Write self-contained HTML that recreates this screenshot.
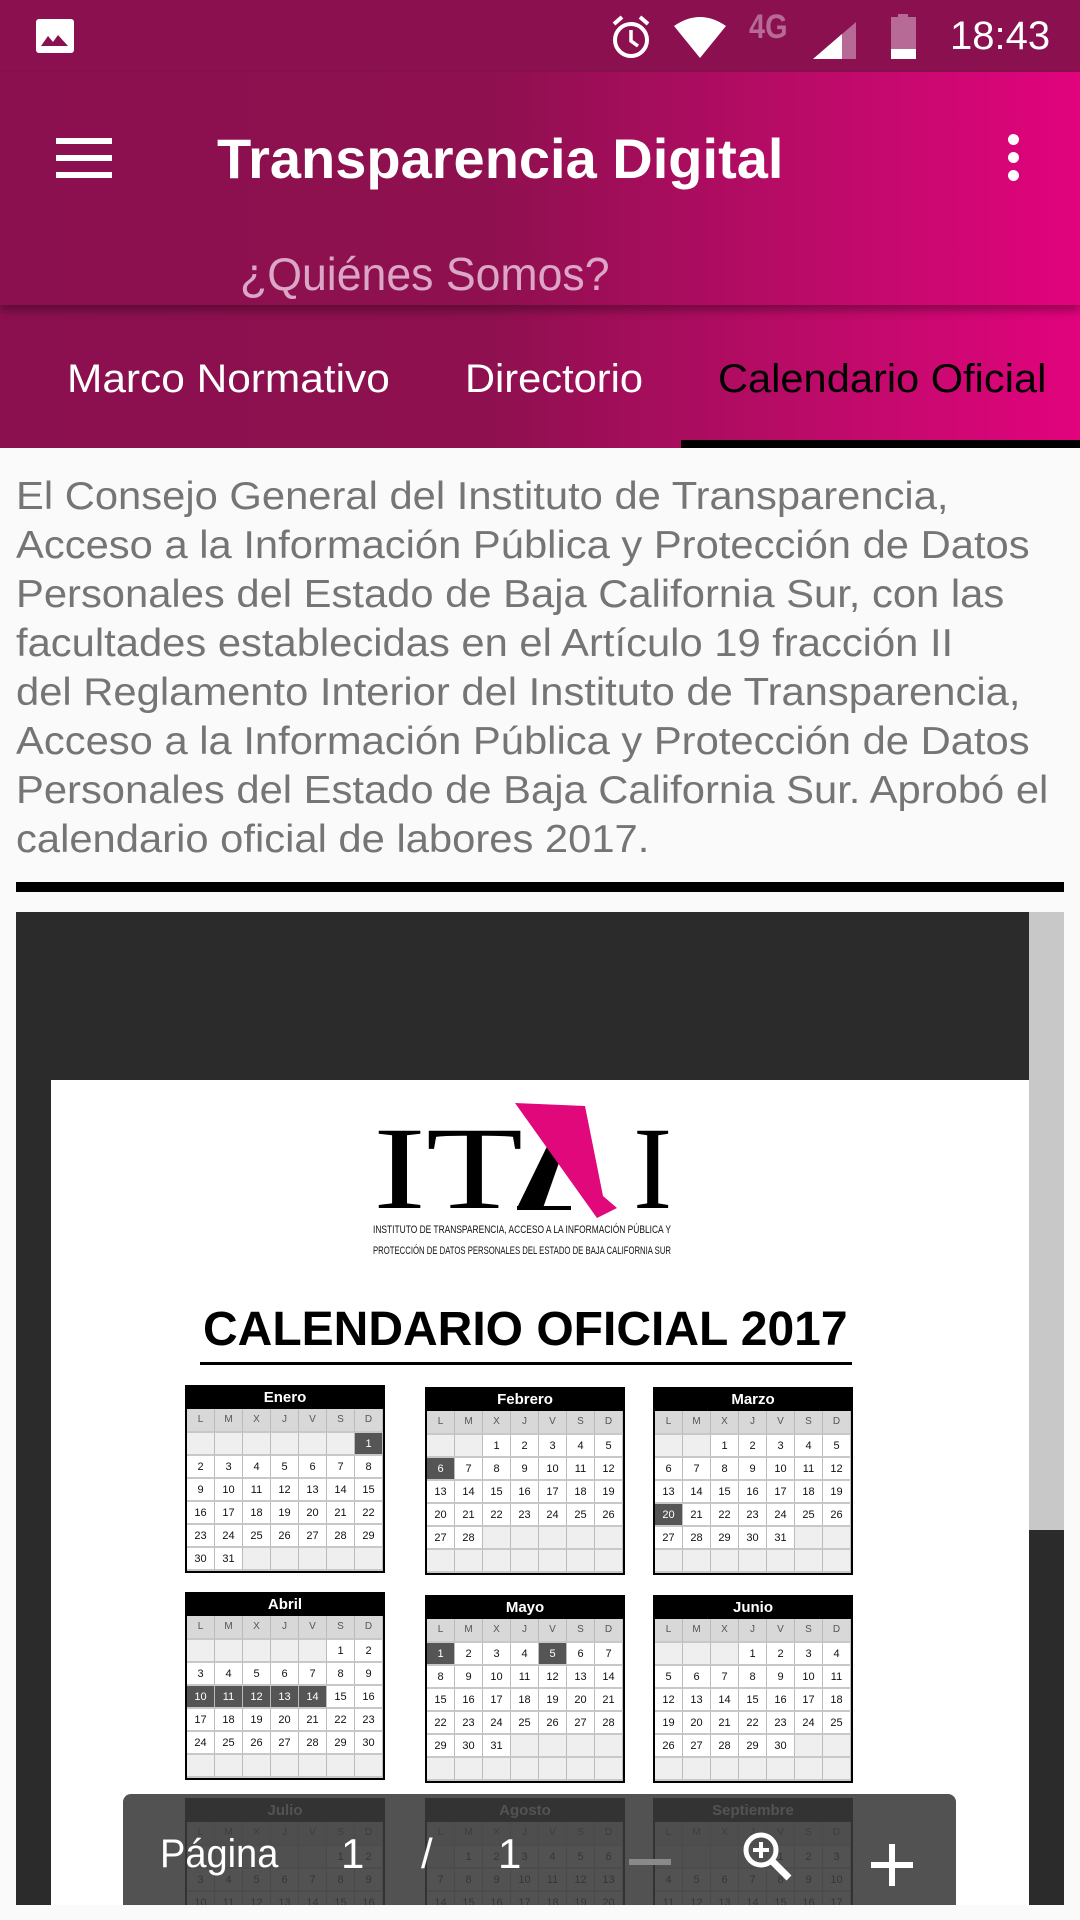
<!DOCTYPE html>
<html><head><meta charset="utf-8">
<style>
*{margin:0;padding:0;box-sizing:border-box}
body{width:1080px;height:1920px;overflow:hidden;background:#fafafa;font-family:"Liberation Sans",sans-serif;position:relative}
.abs{position:absolute}
#status{left:0;top:0;width:1080px;height:72px;background:#8a104f}
#bar{left:0;top:72px;width:1080px;height:233px;background:linear-gradient(90deg,#8b104f 0%,#8e104f 45%,#c20a6c 80%,#e2037d 100%);box-shadow:0 6px 8px rgba(0,0,0,.3);z-index:2}
#tabs{left:0;top:305px;width:1080px;height:143px;background:linear-gradient(90deg,#8b104f 0%,#8e104f 45%,#c20a6c 80%,#e2037d 100%)}
.tab{position:absolute;top:357px;font-size:40px;color:#fff;white-space:nowrap;transform:scaleX(1.06);transform-origin:left}
#para{left:16px;top:472px;font-size:39px;line-height:49px;color:#757575;white-space:nowrap;transform:scaleX(1.07);transform-origin:left}
.cal{position:absolute;width:200px;border:2px solid #000;background:#fff;font-family:"Liberation Sans",sans-serif}
.cal .h{height:22px;background:#000;color:#fff;font-weight:bold;font-size:15px;text-align:center;line-height:22px}
.cal .g{display:grid;grid-template-columns:repeat(7,1fr)}
.cal .g div{height:23px;border-right:1px solid #bbb;border-bottom:2px solid #c8c8c8;font-size:11px;text-align:center;line-height:22px;color:#111}
.cal .w div{background:#d8d8d8;color:#555;font-size:10px;height:24px}
.cal .g div.e{background:#efefef}
.cal .g div.x{background:#555;color:#fff}
</style></head><body>
<div id="status" class="abs">
 <svg class="abs" style="left:35px;top:18px" width="40" height="36" viewBox="0 0 40 36"><rect x="1" y="1" width="38" height="34" rx="3" fill="#fff"/><path d="M6 28 L13 18 L18 24 L23 17 L33 28Z" fill="#8a104f"/></svg>
 <svg class="abs" style="left:610px;top:14px" width="42" height="46" viewBox="0 0 42 46"><circle cx="21" cy="26" r="16" fill="none" stroke="#fff" stroke-width="4"/><path d="M21 16 V27 L28 32" fill="none" stroke="#fff" stroke-width="3.5"/><path d="M4 10 L12 3 M38 10 L30 3" stroke="#fff" stroke-width="4"/></svg>
 <svg class="abs" style="left:672px;top:16px" width="56" height="42" viewBox="0 0 56 42"><path d="M2 10 Q28 -8 54 10 L28 42Z" fill="#fff"/></svg>
 <div class="abs" style="left:749px;top:8px;font-size:34px;font-weight:bold;color:#b66a95;transform:scaleX(.85);transform-origin:left">4G</div>
 <svg class="abs" style="left:813px;top:22px" width="44" height="38" viewBox="0 0 44 38"><path d="M0 37 L43 0 V37Z" fill="#b66a95"/><path d="M0 37 L29 12 V37Z" fill="#fff"/></svg>
 <svg class="abs" style="left:889px;top:14px" width="30" height="46" viewBox="0 0 30 46"><rect x="9" y="0" width="10" height="4" fill="#b66a95"/><rect x="2" y="3" width="25" height="42" fill="#b66a95"/><rect x="2" y="35" width="25" height="10" fill="#fff"/></svg>
 <div class="abs" style="left:950px;top:14px;font-size:40px;color:#fff">18:43</div>
</div>
<div id="bar" class="abs">
 <div class="abs" style="left:56px;top:66px;width:56px;height:6px;background:#fff"></div>
 <div class="abs" style="left:56px;top:83px;width:56px;height:6px;background:#fff"></div>
 <div class="abs" style="left:56px;top:100px;width:56px;height:6px;background:#fff"></div>
 <div class="abs" style="left:217px;top:54px;font-size:56px;font-weight:bold;color:#fff;white-space:nowrap">Transparencia Digital</div>
 <div class="abs" style="left:1008px;top:62px;width:11px;height:11px;border-radius:6px;background:#fff"></div>
 <div class="abs" style="left:1008px;top:80px;width:11px;height:11px;border-radius:6px;background:#fff"></div>
 <div class="abs" style="left:1008px;top:98px;width:11px;height:11px;border-radius:6px;background:#fff"></div>
 <div class="abs" style="left:240px;top:175px;font-size:46px;color:#dca6c6;white-space:nowrap;transform:scaleX(.97);transform-origin:left">¿Quiénes Somos?</div>
</div>
<div id="tabs" class="abs"></div>
<div class="tab" style="left:67px">Marco Normativo</div>
<div class="tab" style="left:465px;transform:scaleX(1.04)">Directorio</div>
<div class="tab" style="left:718px;color:#000;transform:scaleX(1.04)">Calendario Oficial</div>
<div class="abs" style="left:681px;top:440px;width:399px;height:8px;background:#000"></div>
<div id="para" class="abs">El Consejo General del Instituto de Transparencia,<br>Acceso a la Información Pública y Protección de Datos<br>Personales del Estado de Baja California Sur, con las<br>facultades establecidas en el Artículo 19 fracción II<br>del Reglamento Interior del Instituto de Transparencia,<br>Acceso a la Información Pública y Protección de Datos<br>Personales del Estado de Baja California Sur. Aprobó el<br>calendario oficial de labores 2017.</div>
<div class="abs" style="left:16px;top:882px;width:1048px;height:10px;background:#000"></div>
<div class="abs" style="left:16px;top:912px;width:1048px;height:993px;background:#2b2b2b;overflow:hidden">
 <div class="abs" style="left:1013px;top:0;width:35px;height:618px;background:#c8c8c8"></div>
 <div class="abs" style="left:35px;top:168px;width:978px;height:900px;background:#fff">
  <svg class="abs" style="left:320px;top:18px" width="320" height="170" viewBox="0 0 320 170">
   <text x="2" y="110" font-family="Liberation Serif" font-size="118" fill="#000" textLength="150" lengthAdjust="spacingAndGlyphs">IT</text>
   <path d="M146 110 L184 32 L196 42 L172 110Z" fill="#000"/>
   <path d="M146 110 H200" stroke="#000" stroke-width="4"/>
   <path d="M144 5 L214 8 L232 98 L246 110 L226 120 Z" fill="#e0087a"/>
   <text x="262" y="110" font-family="Liberation Serif" font-size="118" fill="#000">I</text>
   <text x="2" y="135" font-family="Liberation Sans" font-size="11" fill="#111" textLength="298" lengthAdjust="spacingAndGlyphs">INSTITUTO DE TRANSPARENCIA, ACCESO A LA INFORMACIÓN PÚBLICA Y</text>
   <text x="2" y="156" font-family="Liberation Sans" font-size="11" fill="#111" textLength="298" lengthAdjust="spacingAndGlyphs">PROTECCIÓN DE DATOS PERSONALES DEL ESTADO DE BAJA CALIFORNIA SUR</text>
  </svg>
  <div class="abs" style="left:152px;top:222px;width:642px;text-align:center;font-size:48px;font-weight:bold;color:#000;white-space:nowrap">CALENDARIO OFICIAL 2017</div>
  <div class="abs" style="left:149px;top:282px;width:652px;height:3px;background:#000"></div>
 </div>
</div>

<div class="cal" style="left:185px;top:1385px"><div class="h">Enero</div><div class="g w"><div>L</div><div>M</div><div>X</div><div>J</div><div>V</div><div>S</div><div>D</div></div><div class="g"><div class="e"></div><div class="e"></div><div class="e"></div><div class="e"></div><div class="e"></div><div class="e"></div><div class="x">1</div><div>2</div><div>3</div><div>4</div><div>5</div><div>6</div><div>7</div><div>8</div><div>9</div><div>10</div><div>11</div><div>12</div><div>13</div><div>14</div><div>15</div><div>16</div><div>17</div><div>18</div><div>19</div><div>20</div><div>21</div><div>22</div><div>23</div><div>24</div><div>25</div><div>26</div><div>27</div><div>28</div><div>29</div><div>30</div><div>31</div><div class="e"></div><div class="e"></div><div class="e"></div><div class="e"></div><div class="e"></div></div></div>

<div class="cal" style="left:425px;top:1387px"><div class="h">Febrero</div><div class="g w"><div>L</div><div>M</div><div>X</div><div>J</div><div>V</div><div>S</div><div>D</div></div><div class="g"><div class="e"></div><div class="e"></div><div>1</div><div>2</div><div>3</div><div>4</div><div>5</div><div class="x">6</div><div>7</div><div>8</div><div>9</div><div>10</div><div>11</div><div>12</div><div>13</div><div>14</div><div>15</div><div>16</div><div>17</div><div>18</div><div>19</div><div>20</div><div>21</div><div>22</div><div>23</div><div>24</div><div>25</div><div>26</div><div>27</div><div>28</div><div class="e"></div><div class="e"></div><div class="e"></div><div class="e"></div><div class="e"></div><div class="e"></div><div class="e"></div><div class="e"></div><div class="e"></div><div class="e"></div><div class="e"></div><div class="e"></div></div></div>

<div class="cal" style="left:653px;top:1387px"><div class="h">Marzo</div><div class="g w"><div>L</div><div>M</div><div>X</div><div>J</div><div>V</div><div>S</div><div>D</div></div><div class="g"><div class="e"></div><div class="e"></div><div>1</div><div>2</div><div>3</div><div>4</div><div>5</div><div>6</div><div>7</div><div>8</div><div>9</div><div>10</div><div>11</div><div>12</div><div>13</div><div>14</div><div>15</div><div>16</div><div>17</div><div>18</div><div>19</div><div class="x">20</div><div>21</div><div>22</div><div>23</div><div>24</div><div>25</div><div>26</div><div>27</div><div>28</div><div>29</div><div>30</div><div>31</div><div class="e"></div><div class="e"></div><div class="e"></div><div class="e"></div><div class="e"></div><div class="e"></div><div class="e"></div><div class="e"></div><div class="e"></div></div></div>

<div class="cal" style="left:185px;top:1592px"><div class="h">Abril</div><div class="g w"><div>L</div><div>M</div><div>X</div><div>J</div><div>V</div><div>S</div><div>D</div></div><div class="g"><div class="e"></div><div class="e"></div><div class="e"></div><div class="e"></div><div class="e"></div><div>1</div><div>2</div><div>3</div><div>4</div><div>5</div><div>6</div><div>7</div><div>8</div><div>9</div><div class="x">10</div><div class="x">11</div><div class="x">12</div><div class="x">13</div><div class="x">14</div><div>15</div><div>16</div><div>17</div><div>18</div><div>19</div><div>20</div><div>21</div><div>22</div><div>23</div><div>24</div><div>25</div><div>26</div><div>27</div><div>28</div><div>29</div><div>30</div><div class="e"></div><div class="e"></div><div class="e"></div><div class="e"></div><div class="e"></div><div class="e"></div><div class="e"></div></div></div>

<div class="cal" style="left:425px;top:1595px"><div class="h">Mayo</div><div class="g w"><div>L</div><div>M</div><div>X</div><div>J</div><div>V</div><div>S</div><div>D</div></div><div class="g"><div class="x">1</div><div>2</div><div>3</div><div>4</div><div class="x">5</div><div>6</div><div>7</div><div>8</div><div>9</div><div>10</div><div>11</div><div>12</div><div>13</div><div>14</div><div>15</div><div>16</div><div>17</div><div>18</div><div>19</div><div>20</div><div>21</div><div>22</div><div>23</div><div>24</div><div>25</div><div>26</div><div>27</div><div>28</div><div>29</div><div>30</div><div>31</div><div class="e"></div><div class="e"></div><div class="e"></div><div class="e"></div><div class="e"></div><div class="e"></div><div class="e"></div><div class="e"></div><div class="e"></div><div class="e"></div><div class="e"></div></div></div>

<div class="cal" style="left:653px;top:1595px"><div class="h">Junio</div><div class="g w"><div>L</div><div>M</div><div>X</div><div>J</div><div>V</div><div>S</div><div>D</div></div><div class="g"><div class="e"></div><div class="e"></div><div class="e"></div><div>1</div><div>2</div><div>3</div><div>4</div><div>5</div><div>6</div><div>7</div><div>8</div><div>9</div><div>10</div><div>11</div><div>12</div><div>13</div><div>14</div><div>15</div><div>16</div><div>17</div><div>18</div><div>19</div><div>20</div><div>21</div><div>22</div><div>23</div><div>24</div><div>25</div><div>26</div><div>27</div><div>28</div><div>29</div><div>30</div><div class="e"></div><div class="e"></div><div class="e"></div><div class="e"></div><div class="e"></div><div class="e"></div><div class="e"></div><div class="e"></div><div class="e"></div></div></div>

<div class="abs" style="left:0;top:1798px;width:1080px;height:107px;overflow:hidden">
<div class="cal" style="left:185px;top:0"><div class="h">Julio</div><div class="g w"><div>L</div><div>M</div><div>X</div><div>J</div><div>V</div><div>S</div><div>D</div></div><div class="g"><div class="e"></div><div class="e"></div><div class="e"></div><div class="e"></div><div class="e"></div><div>1</div><div>2</div><div>3</div><div>4</div><div>5</div><div>6</div><div>7</div><div>8</div><div>9</div><div>10</div><div>11</div><div>12</div><div>13</div><div>14</div><div>15</div><div>16</div></div></div>
<div class="cal" style="left:425px;top:0"><div class="h">Agosto</div><div class="g w"><div>L</div><div>M</div><div>X</div><div>J</div><div>V</div><div>S</div><div>D</div></div><div class="g"><div class="e"></div><div>1</div><div>2</div><div>3</div><div>4</div><div>5</div><div>6</div><div>7</div><div>8</div><div>9</div><div>10</div><div>11</div><div>12</div><div>13</div><div>14</div><div>15</div><div>16</div><div>17</div><div>18</div><div>19</div><div>20</div></div></div>
<div class="cal" style="left:653px;top:0"><div class="h">Septiembre</div><div class="g w"><div>L</div><div>M</div><div>X</div><div>J</div><div>V</div><div>S</div><div>D</div></div><div class="g"><div class="e"></div><div class="e"></div><div class="e"></div><div class="e"></div><div>1</div><div>2</div><div>3</div><div>4</div><div>5</div><div>6</div><div>7</div><div>8</div><div>9</div><div>10</div><div>11</div><div>12</div><div>13</div><div>14</div><div>15</div><div>16</div><div>17</div></div></div>
</div>

<div class="abs" style="left:123px;top:1794px;width:833px;height:120px;border-radius:8px;background:rgba(58,58,58,.88)">
 <div class="abs" style="left:37px;top:38px;font-size:40px;color:#fff;transform:scaleX(.95);transform-origin:left">Página</div>
 <div class="abs" style="left:218px;top:36px;font-size:42px;color:#fff">1</div>
 <div class="abs" style="left:298px;top:36px;font-size:42px;color:#fff">/</div>
 <div class="abs" style="left:375px;top:36px;font-size:42px;color:#fff">1</div>
 <div class="abs" style="left:506px;top:65px;width:42px;height:6px;background:#8a8a8a"></div>
 <svg class="abs" style="left:618px;top:36px" width="56" height="56" viewBox="0 0 56 56"><circle cx="20" cy="20" r="15" fill="none" stroke="#fff" stroke-width="5"/><path d="M31 31 L48 48" stroke="#fff" stroke-width="7"/><path d="M20 12 V28 M12 20 H28" stroke="#fff" stroke-width="4"/></svg>
 <div class="abs" style="left:748px;top:68px;width:42px;height:6px;background:#fff"></div>
 <div class="abs" style="left:766px;top:50px;width:6px;height:42px;background:#fff"></div>
</div>
<div class="abs" style="left:0;top:1905px;width:1080px;height:15px;background:#fafafa"></div>
</body></html>
